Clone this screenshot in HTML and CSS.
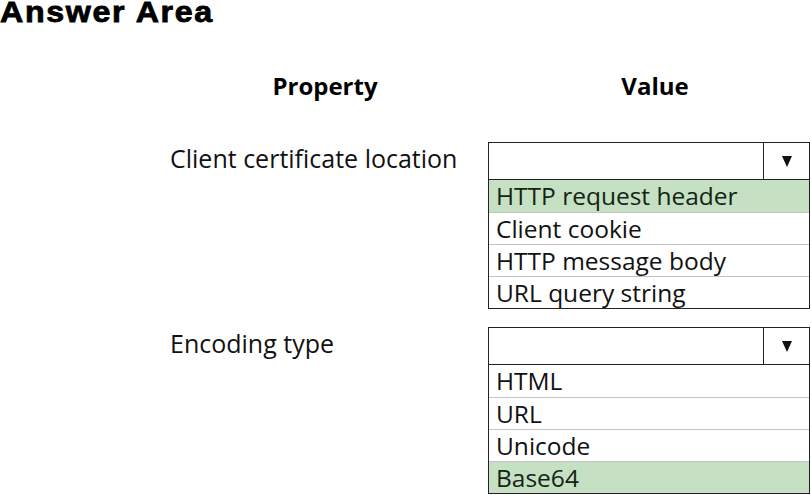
FILE: index.html
```html
<!DOCTYPE html>
<html lang="en">
<head>
    <meta charset="UTF-8">
    <title>Answer Area</title>
    <link rel="stylesheet" href="styles.css">
</head>
<body>
    <h1 class="title">Answer Area</h1>

    <div class="answer">
        <div class="head">Property</div>
        <div class="head value">Value</div>

        <!-- Client certificate location -->
        <div class="label">Client certificate location</div>
        <div class="dropdown">
            <div class="select">
                <span class="current"></span>
                <span class="arrow"><svg width="10" height="11" viewBox="0 0 10 11"><path d="M0 0 L10 0 L5 11 Z" fill="#111"/></svg></span>
            </div>
            <div class="option picked">HTTP request header</div>
            <div class="option">Client cookie</div>
            <div class="option">HTTP message body</div>
            <div class="option">URL query string</div>
        </div>

        <!-- Encoding type -->
        <div class="label">Encoding type</div>
        <div class="dropdown">
            <div class="select">
                <span class="current"></span>
                <span class="arrow"><svg width="10" height="11" viewBox="0 0 10 11"><path d="M0 0 L10 0 L5 11 Z" fill="#111"/></svg></span>
            </div>
            <div class="option">HTML</div>
            <div class="option">URL</div>
            <div class="option">Unicode</div>
            <div class="option picked">Base64</div>
        </div>
    </div>
</body>
</html>
```

FILE: styles.css
```css
body {
    margin: 0;
    background: #fff;
    color: #111;
    font-family: "Open Sans", "Noto Sans", sans-serif;
}
.title {
    margin: -2px 0 0 0;
    font-family: "Liberation Sans", Arial, sans-serif;
    font-size: 29px;
    line-height: 29px;
    font-weight: bold;
    letter-spacing: 1.5px;
    -webkit-text-stroke: 0.8px #000;
    color: #000;
    display: inline-block;
    transform: scaleX(1.11);
    transform-origin: left top;
}
.answer {
    display: grid;
    grid-template-columns: 310px 322px;
    column-gap: 8px;
    row-gap: 18px;
    padding: 44px 0 0 170px;
}
.head {
    text-align: center;
    font-weight: bold;
    font-size: 24px;
    line-height: 30px;
    margin-bottom: 23px;
    color: #000;
}
.head.value {
    padding-left: 12px;
}
.label {
    font-size: 25px;
    line-height: 32px;
}
.dropdown {
    border: 1px solid #222;
}
.select {
    display: flex;
    height: 37px;
    border-bottom: 1px solid #222;
    box-sizing: border-box;
}
.current {
    flex: 1;
}
.arrow {
    width: 45px;
    border-left: 1px solid #222;
    display: flex;
    align-items: center;
    justify-content: center;
}
.option {
    height: 32px;
    box-sizing: border-box;
    padding-left: 7px;
    font-size: 24.5px;
    line-height: 32px;
    border-top: 1px solid #c4c4c4;
    white-space: nowrap;
}
.select + .option {
    border-top: none;
}
.picked {
    background: #c5e0c3;
    color: #142414;
}
```
